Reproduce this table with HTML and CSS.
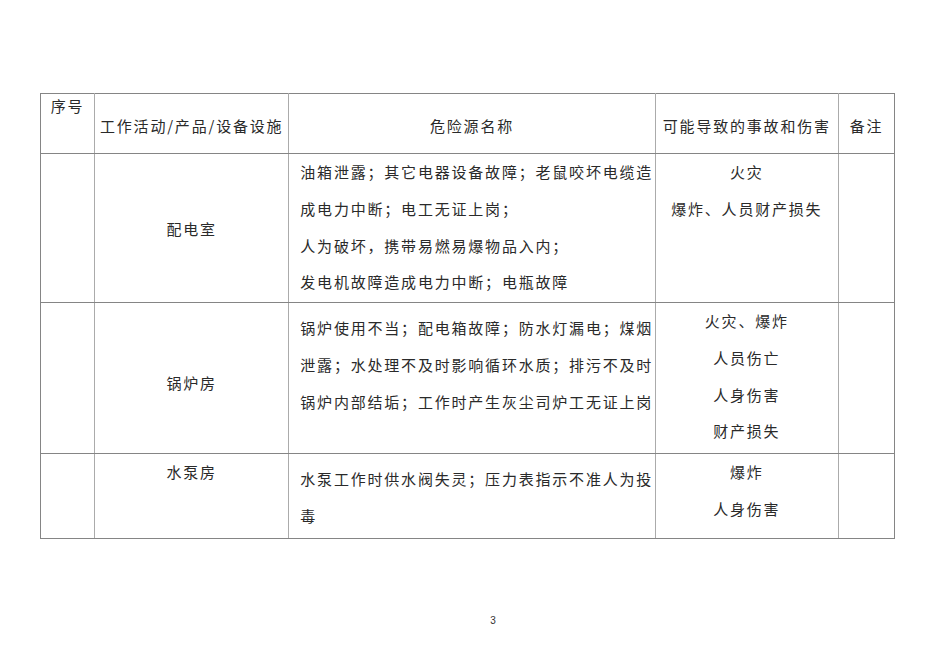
FILE: index.html
```html
<!DOCTYPE html>
<html lang="zh-CN">
<head>
<meta charset="utf-8">
<link rel="stylesheet" href="styles.css">
</head>
<body>
<div class="page">
  <table class="hazard">
    <colgroup>
      <col class="c1"><col class="c2"><col class="c3"><col class="c4"><col class="c5">
    </colgroup>
    <tr class="head">
      <th class="seq">序号</th>
      <th>工作活动/产品/设备设施</th>
      <th>危险源名称</th>
      <th>可能导致的事故和伤害</th>
      <th>备注</th>
    </tr>
    <tr class="r1">
      <td></td>
      <td class="place mid">配电室</td>
      <td class="src lift">油箱泄露；其它电器设备故障；老鼠咬坏电缆造<br>成电力中断；电工无证上岗；<br>人为破坏，携带易燃易爆物品入内；<br>发电机故障造成电力中断；电瓶故障</td>
      <td class="res lift">火灾<br>爆炸、人员财产损失</td>
      <td></td>
    </tr>
    <tr class="r2">
      <td></td>
      <td class="place mid2">锅炉房</td>
      <td class="src pad">锅炉使用不当；配电箱故障；防水灯漏电；煤烟<br>泄露；水处理不及时影响循环水质；排污不及时<br>锅炉内部结垢；工作时产生灰尘司炉工无证上岗</td>
      <td class="res lift">火灾、爆炸<br>人员伤亡<br>人身伤害<br>财产损失</td>
      <td></td>
    </tr>
    <tr class="r3">
      <td></td>
      <td class="place lift">水泵房</td>
      <td class="src pad">水泵工作时供水阀失灵；压力表指示不准人为投<br>毒</td>
      <td class="res lift">爆炸<br>人身伤害</td>
      <td></td>
    </tr>
  </table>
  <div class="footer">3</div>
</div>
</body>
</html>
```

FILE: styles.css
```css
html, body {
  margin: 0;
  padding: 0;
  background: #ffffff;
}

body {
  font-family: "Noto Sans CJK SC", "Noto Sans", sans-serif;
  color: #2a2a2a;
}

.page {
  padding: 93px 0 0 40px;
}

.hazard {
  border-collapse: collapse;
  table-layout: fixed;
  width: 855px;
  font-size: 15px;
  letter-spacing: 1.8px;
  border: 1px solid #858585;
}

.c1 { width: 54px; }
.c2 { width: 194px; }
.c3 { width: 366px; }
.c4 { width: 183px; }
.c5 { width: 56px; }

.hazard th,
.hazard td {
  border-top: 1px solid #858585;
  border-bottom: 1px solid #858585;
  border-left: 1px solid #ababab;
  border-right: 1px solid #ababab;
  padding: 0;
  font-weight: normal;
  text-align: center;
  vertical-align: top;
  line-height: 37px;
  white-space: nowrap;
}

.hazard th:first-child,
.hazard td:first-child {
  border-left: 1px solid #858585;
}

.hazard th:last-child,
.hazard td:last-child {
  border-right: 1px solid #858585;
}

.head {
  height: 60px;
}

.head th {
  vertical-align: middle;
  padding-top: 4px;
  line-height: 24px;
}

.head th.seq {
  vertical-align: top;
  padding-top: 0;
  line-height: 24px;
}

.r1 { height: 149px; }
.r2 { height: 151px; }
.r3 { height: 85px; }

.hazard td.lift {
  line-height: 36.8px;
  padding-top: 0;
}

.hazard td.mid {
  vertical-align: middle;
}

.hazard td.mid2 {
  vertical-align: middle;
  padding-top: 8px;
}

.hazard td.src {
  text-align: left;
  padding-left: 11px;
}

.hazard td.pad {
  padding-top: 6px;
}

.footer {
  width: 855px;
  margin-top: 76px;
  padding-left: 51px;
  box-sizing: border-box;
  text-align: center;
  font-family: "Liberation Sans", sans-serif;
  font-size: 10px;
  color: #333;
}
```
